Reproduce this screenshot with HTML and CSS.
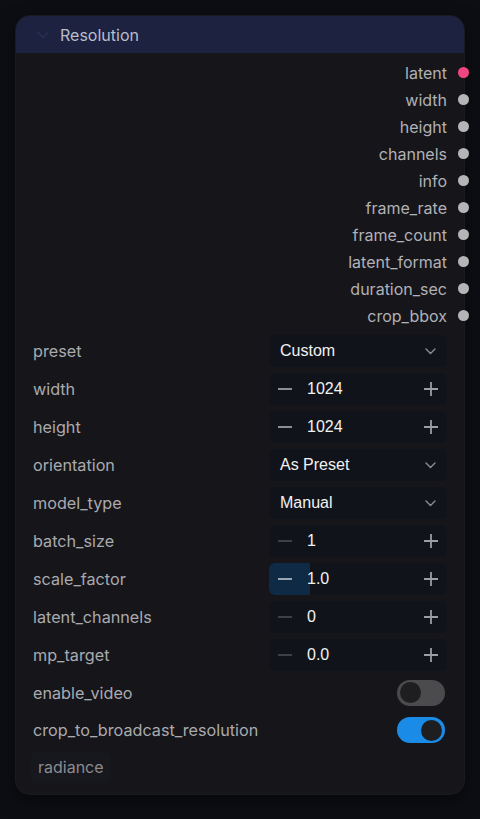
FILE: index.html
```html
<!DOCTYPE html>
<html>
<head>
<meta charset="utf-8">
<link rel="stylesheet" href="styles.css">
</head>
<body>
<div class="node">
  <div class="header">
    <svg class="hchev" width="12" height="8" viewBox="0 0 12 8"><path d="M1 1.5 L6 6.5 L11 1.5" fill="none" stroke="currentColor" stroke-width="1.6" stroke-linecap="round" stroke-linejoin="round"/></svg>
    <span class="title">Resolution</span>
  </div>
  <div class="outputs">
    <div class="out"><span>latent</span><i class="dot pink"></i></div>
    <div class="out"><span>width</span><i class="dot"></i></div>
    <div class="out"><span>height</span><i class="dot"></i></div>
    <div class="out"><span>channels</span><i class="dot"></i></div>
    <div class="out"><span>info</span><i class="dot"></i></div>
    <div class="out"><span>frame_rate</span><i class="dot"></i></div>
    <div class="out"><span>frame_count</span><i class="dot"></i></div>
    <div class="out"><span>latent_format</span><i class="dot"></i></div>
    <div class="out"><span>duration_sec</span><i class="dot"></i></div>
    <div class="out"><span>crop_bbox</span><i class="dot"></i></div>
  </div>
  <div class="widgets">
    <div class="row"><span class="label">preset</span>
      <div class="box select"><span class="val">Custom</span><svg class="chev" width="11" height="7" viewBox="0 0 11 7"><path d="M1 1 L5.5 5.5 L10 1" fill="none" stroke="currentColor" stroke-width="1.4" stroke-linecap="round" stroke-linejoin="round"/></svg></div></div>
    <div class="row"><span class="label">width</span>
      <div class="box num"><span class="btn minus"><svg width="16" height="16" viewBox="0 0 16 16"><path d="M1 8 H15" stroke="currentColor" stroke-width="1.8"/></svg></span><span class="val">1024</span><span class="btn plus"><svg width="16" height="16" viewBox="0 0 16 16"><path d="M1 8 H15 M8 1 V15" stroke="currentColor" stroke-width="1.8"/></svg></span></div></div>
    <div class="row"><span class="label">height</span>
      <div class="box num"><span class="btn minus"><svg width="16" height="16" viewBox="0 0 16 16"><path d="M1 8 H15" stroke="currentColor" stroke-width="1.8"/></svg></span><span class="val">1024</span><span class="btn plus"><svg width="16" height="16" viewBox="0 0 16 16"><path d="M1 8 H15 M8 1 V15" stroke="currentColor" stroke-width="1.8"/></svg></span></div></div>
    <div class="row"><span class="label">orientation</span>
      <div class="box select"><span class="val">As Preset</span><svg class="chev" width="11" height="7" viewBox="0 0 11 7"><path d="M1 1 L5.5 5.5 L10 1" fill="none" stroke="currentColor" stroke-width="1.4" stroke-linecap="round" stroke-linejoin="round"/></svg></div></div>
    <div class="row"><span class="label">model_type</span>
      <div class="box select"><span class="val">Manual</span><svg class="chev" width="11" height="7" viewBox="0 0 11 7"><path d="M1 1 L5.5 5.5 L10 1" fill="none" stroke="currentColor" stroke-width="1.4" stroke-linecap="round" stroke-linejoin="round"/></svg></div></div>
    <div class="row"><span class="label">batch_size</span>
      <div class="box num"><span class="btn minus off"><svg width="16" height="16" viewBox="0 0 16 16"><path d="M1 8 H15" stroke="currentColor" stroke-width="1.8"/></svg></span><span class="val">1</span><span class="btn plus"><svg width="16" height="16" viewBox="0 0 16 16"><path d="M1 8 H15 M8 1 V15" stroke="currentColor" stroke-width="1.8"/></svg></span></div></div>
    <div class="row"><span class="label">scale_factor</span>
      <div class="box num"><span class="btn minus hl"><svg width="16" height="16" viewBox="0 0 16 16"><path d="M1 8 H15" stroke="currentColor" stroke-width="1.8"/></svg></span><span class="val">1.0</span><span class="btn plus"><svg width="16" height="16" viewBox="0 0 16 16"><path d="M1 8 H15 M8 1 V15" stroke="currentColor" stroke-width="1.8"/></svg></span></div></div>
    <div class="row"><span class="label">latent_channels</span>
      <div class="box num"><span class="btn minus off"><svg width="16" height="16" viewBox="0 0 16 16"><path d="M1 8 H15" stroke="currentColor" stroke-width="1.8"/></svg></span><span class="val">0</span><span class="btn plus"><svg width="16" height="16" viewBox="0 0 16 16"><path d="M1 8 H15 M8 1 V15" stroke="currentColor" stroke-width="1.8"/></svg></span></div></div>
    <div class="row"><span class="label">mp_target</span>
      <div class="box num"><span class="btn minus off"><svg width="16" height="16" viewBox="0 0 16 16"><path d="M1 8 H15" stroke="currentColor" stroke-width="1.8"/></svg></span><span class="val">0.0</span><span class="btn plus"><svg width="16" height="16" viewBox="0 0 16 16"><path d="M1 8 H15 M8 1 V15" stroke="currentColor" stroke-width="1.8"/></svg></span></div></div>
    <div class="row tall"><span class="label">enable_video</span>
      <span class="toggle"><i class="knob"></i></span></div>
    <div class="row tall"><span class="label">crop_to_broadcast_resolution</span>
      <span class="toggle on"><i class="knob"></i></span></div>
  </div>
  <div class="footer"><span class="tag">radiance</span></div>
</div>
</body>
</html>
```

FILE: styles.css
```css
html, body {
  margin: 0;
  padding: 0;
  background: #0c0e13;
  width: 480px;
  height: 819px;
  overflow: hidden;
}
body {
  font-family: Inter, "Noto Sans", sans-serif;
  font-size: 16px;
}
.node {
  margin: 16px 0 0 16px;
  width: 448px;
  height: 778px;
  background: #16161a;
  border-radius: 14px;
  box-shadow: 0 0 0 1px #1a1b20, 0 6px 18px rgba(0,0,0,0.5);
  display: flex;
  flex-direction: column;
}
.header {
  height: 37px;
  background: #1d2240;
  border-radius: 14px 14px 0 0;
  display: flex;
  align-items: center;
  padding-left: 21px;
  box-sizing: border-box;
}
.hchev {
  color: #283052;
  margin-right: 11px;
}
.title {
  color: #b9bdca;
  font-size: 16px;
}
.outputs {
  padding-top: 6px;
  display: flex;
  flex-direction: column;
}
.out {
  height: 27px;
  display: flex;
  align-items: center;
  justify-content: flex-end;
  gap: 11px;
  margin-right: -5px;
  color: #b1b1b6;
}
.dot {
  width: 11px;
  height: 11px;
  border-radius: 50%;
  background: #b5b5b8;
  display: block;
}
.dot.pink { background: #f0467f; }
.widgets {
  margin-top: 3px;
  display: flex;
  flex-direction: column;
  padding: 0 17px;
}
.row {
  height: 38px;
  display: flex;
  align-items: center;
  justify-content: space-between;
}
.label {
  color: #aaaaaf;
  font-size: 16.2px;
}
.box {
  width: 178px;
  height: 32px;
  background: #10141a;
  border-radius: 6px;
  display: flex;
  align-items: center;
  box-sizing: border-box;
  font-family: "Liberation Sans", Arial, sans-serif;
  color: #f2f2f2;
  font-size: 16px;
}
.select {
  padding: 0 11px 0 11px;
  justify-content: space-between;
}
.chev { color: #8d8d93; }
.num { padding-right: 8px; }
.btn {
  display: flex;
  align-items: center;
  justify-content: center;
  height: 32px;
  color: #9d9da2;
}
.minus {
  width: 32px;
  margin-right: 6px;
  border-radius: 6px 0 0 6px;
  box-sizing: border-box;
}
.minus.off { color: #45464c; }
.minus.hl {
  background: #0e2a45;
  color: #a9b4c2;
  width: 41px;
  margin-right: -3px;
  justify-content: flex-start;
  padding-left: 8px;
}
.val { flex: 1; }
.select .val { flex: none; }
.plus { width: 16px; }
.toggle {
  width: 48px;
  height: 26px;
  border-radius: 13px;
  background: #4b4b4e;
  display: flex;
  align-items: center;
  padding: 0 3px;
  box-sizing: border-box;
  margin-right: 2px;
}
.knob {
  width: 21px;
  height: 21px;
  border-radius: 50%;
  background: #1e1e21;
  display: block;
}
.toggle.on {
  background: #1a8ce8;
  justify-content: flex-end;
}
.row.tall { height: 37.5px; }
.footer {
  padding: 3px 0 0 15px;
}
.tag {
  display: inline-block;
  padding: 5px 7px 6px 7px;
  background: #17181d;
  border-radius: 6px;
  color: #8b8b91;
  font-size: 16px;
}
```
